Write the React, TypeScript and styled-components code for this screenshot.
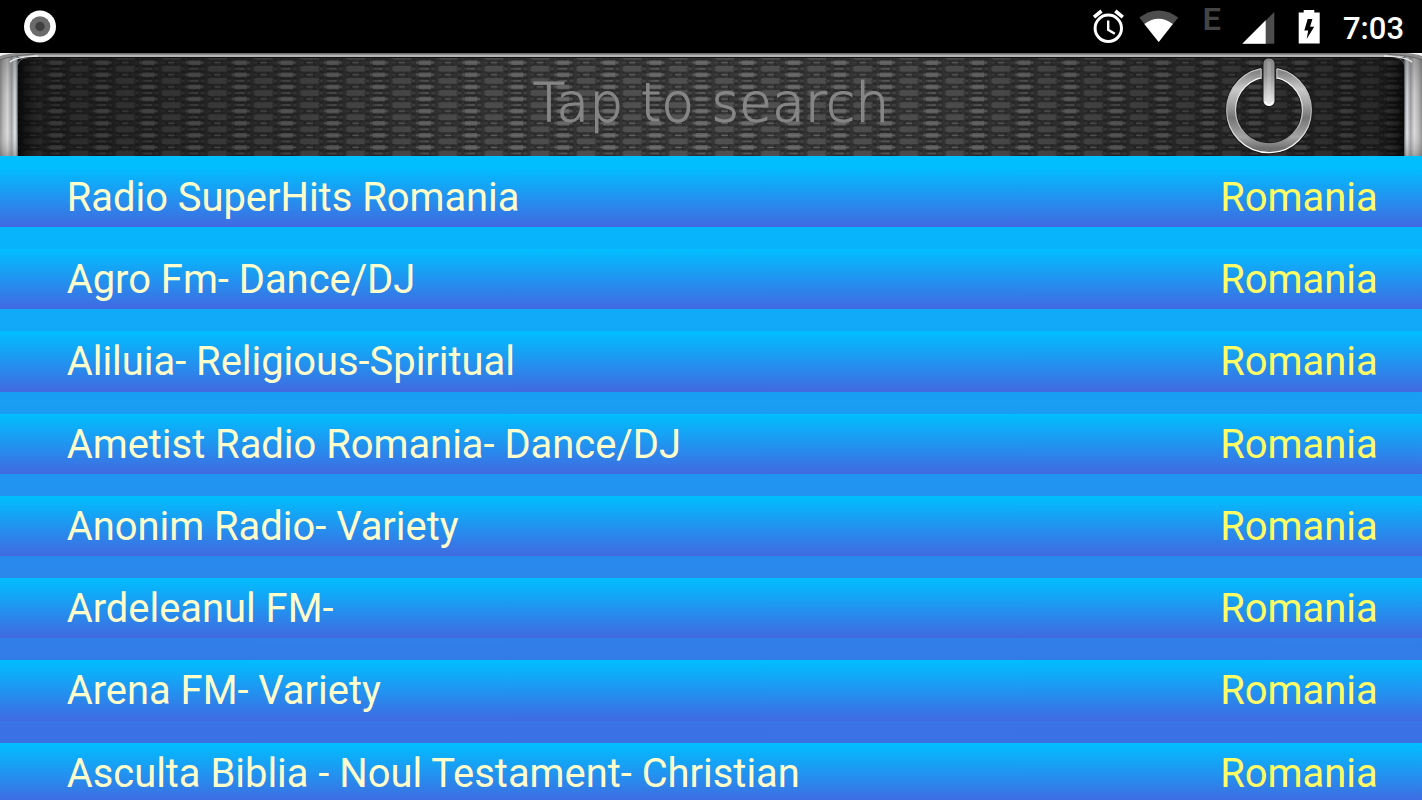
import * as React from 'react';
import styled, { createGlobalStyle } from 'styled-components';

interface IStation {
    name: string
    country: string
}

const stations: IStation[] = [
    { name: 'Radio SuperHits Romania', country: 'Romania' },
    { name: 'Agro Fm- Dance/DJ', country: 'Romania' },
    { name: 'Aliluia- Religious-Spiritual', country: 'Romania' },
    { name: 'Ametist Radio Romania- Dance/DJ', country: 'Romania' },
    { name: 'Anonim Radio- Variety', country: 'Romania' },
    { name: 'Ardeleanul FM-', country: 'Romania' },
    { name: 'Arena FM- Variety', country: 'Romania' },
    { name: 'Asculta Biblia - Noul Testament- Christian', country: 'Romania' },
];

const GlobalStyle = createGlobalStyle`
    body{
        margin: 0;
        background-color: #000;
        overflow: hidden;
    }
`;

const Root = styled.div`
    display: flex;
    flex-direction: column;
    width: 100%;
    height: 800px;
    overflow: hidden;
    font-family: Roboto, sans-serif;
`;

const StatusBar = styled.div`
    flex: none;
    height: 53px;
    display: flex;
    justify-content: space-between;
    background-color: #000;
`;

const StatusRight = styled.div`
    display: flex;
`;

const Clock = styled.div`
    width: 79px;
    padding: 10px 0 0 1px;
    font-size: 31px;
    font-weight: 500;
    line-height: 38px;
    color: #fff;
`;

const Header = styled.div`
    flex: none;
    position: relative;
    height: 103px;
    display: flex;
    justify-content: center;
    background-color: #222;
`;

const HeaderArt = styled.svg`
    position: absolute;
    inset: 0;
`;

const SearchLabel = styled.div`
    position: relative;
    padding-top: 19px;
    font-family: 'DejaVu Sans', sans-serif;
    font-size: 53px;
    font-weight: 200;
    line-height: 62px;
    letter-spacing: 0.3px;
    white-space: pre;
    color: #868686;
    -webkit-text-stroke: 1.1px #868686;
`;

const List = styled.div`
    flex: 1;
    display: flex;
    flex-direction: column;
    gap: 22px;
    padding-top: 10.9px;
    overflow: hidden;
    background: linear-gradient(#00bfff, #4169e1);
`;

const Row = styled.div`
    flex: none;
    height: 60.25px;
    display: flex;
    justify-content: space-between;
    padding: 0 44.4px 0 66.7px;
    font-size: 39.88px;
    line-height: 61px;
    white-space: pre;
    background: linear-gradient(#00bfff, #4169e1);
`;

const StationName = styled.span`
    color: #ffffcc;
`;

const Country = styled.span`
    color: #ffff66;
`;

const StatusIcons = () => (
    <svg width="262" height="53" viewBox="1080 0 262 53">
        <g fill="none" stroke="#fff">
            <circle cx="1108.3" cy="28.3" r="13.2" strokeWidth="3" />
            <path d="M1108.2 20.5v9.2l6.6 4" strokeWidth="2.4" />
            <path d="M1094 17.200l7.500-6.200M1122.800 17.200l-7.500-6.200" strokeWidth="3.6" />
        </g>
        <path d="M1139.300 17.500Q1158.700 3.500 1178.300 17.500L1158.700 42z" fill="#4d4d4d" />
        <path d="M1144.300 24Q1158.600 13.500 1172.800 24L1158.700 42z" fill="#fff" />
        <path d="M1274.300 12v31.700h-32z" fill="#4d4d4d" />
        <path d="M1265.700 20.300v23.400h-23.400z" fill="#fff" />
        <path d="M1303.700 10h10.600v2.500h5.400v31h-21v-31h5z" fill="#fff" />
        <path d="M1307.700 19l-3.400 11.500h3.900l-1.500 8.500 7.500-12.300h-4.100l2.300-7.700z" fill="#000" />
        <text x="1202.500" y="29.700" fontFamily="Roboto" fontSize="30.500" fontWeight="600" textLength="18.500" lengthAdjust="spacingAndGlyphs" fill="#444">E</text>
    </svg>
);

// one side of the metal frame, the right side is the same drawing mirrored
const Pillar = () => (
    <g>
        <rect x="0" y="0" width="18" height="103" fill="url(#pillar)" />
        <rect x="0" y="0" width="18" height="103" fill="url(#pillarShade)" />
        <path d="M18 103V12Q18 5 27 4H40V103z" fill="url(#innerShadow)" />
        <path d="M0 0H36Q12 2 0 7z" fill="#8d8d8d" />
        <path d="M0 0H16Q6 1 0 3z" fill="#f2f2f2" />
        <path d="M0 7Q10 2.500 34 1.500" fill="none" stroke="#666" strokeWidth="1" />
        <path d="M10 9Q16 3.700 38 3" fill="none" stroke="#e6e6e6" strokeWidth="1.7" />
        <path d="M17.500 12Q18.500 5.500 28 4.500" fill="none" stroke="#666" strokeWidth="1" />
    </g>
);

const PowerIcon = () => (
    <g>
        <mask id="ringGap">
            <rect x="1215" y="0" width="110" height="103" fill="#fff" />
            <rect x="1261" y="0" width="16" height="45" fill="#000" />
        </mask>
        <g mask="url(#ringGap)" fill="none">
            <circle cx="1269" cy="57.300" r="38" stroke="#1a1a1a" strokeWidth="12" />
            <circle cx="1269" cy="57.300" r="38" stroke="url(#ring)" strokeWidth="9.500" />
            <circle cx="1269" cy="57.300" r="42.300" stroke="url(#ringOuter)" strokeWidth="1.2" />
            <circle cx="1269" cy="57.300" r="33.500" stroke="url(#ringInner)" strokeWidth="1.3" />
        </g>
        <path d="M1261.200 16v10M1276.800 16v10" stroke="#d0d0d0" strokeWidth="1" />
        <rect x="1262.500" y="5" width="13" height="49" rx="6" fill="#1a1a1a" />
        <rect x="1263.500" y="5.500" width="11" height="47.500" rx="5" fill="url(#stick)" />
        <rect x="1267" y="8" width="4" height="40" rx="2" fill="#fff" opacity="0.15" />
        <path d="M1265 49Q1269 55 1273 49" fill="none" stroke="#fff" strokeWidth="1.6" />
    </g>
);

const App: React.FunctionComponent = () => {
    return (
        <Root>
            <GlobalStyle />
            <StatusBar>
                <svg width="80" height="53">
                    <circle cx="40" cy="26.5" r="16" fill="#fff" />
                    <circle cx="40" cy="26.5" r="10.3" fill="#6b6b6b" />
                    <circle cx="40" cy="26.5" r="4.7" fill="#404040" />
                </svg>
                <StatusRight>
                    <StatusIcons />
                    <Clock>7:03</Clock>
                </StatusRight>
            </StatusBar>
            <Header>
                <HeaderArt width="1422" height="103" viewBox="0 0 1422 103">
                    <defs>
                        <pattern id="mesh" x="10" y="3.700" width="46.1" height="12.1" patternUnits="userSpaceOnUse">
                            <rect width="46.1" height="12.1" fill="#363636" />
                            <path d="M0 3h46.100M0 9h46.100" stroke="#272727" strokeWidth="1.4" strokeDasharray="4 2.590" />
                            <path d="M0 6h46.100M0 0.500h46.100M0 11.700h46.100" stroke="#484848" strokeWidth="1" strokeDasharray="3.300 3.290" />
                            {/* plain column */}
                            <path d="M15 0h16l2 1.500-2 1.500h-16l-2-1.500zM15 9h16l2 1.500-2 1.600h-16l-2-1.600z" fill="#525252" />
                            <path d="M16 4.200h4l3 1 3-1h4l-3 1.800 3 1.800h-4l-3-1-3 1h-4l3-1.800z" fill="#292929" />
                            <path d="M19.500 6h7" stroke="#6a6a6a" strokeWidth="1.4" />
                            {/* bright column, split over the tile edges */}
                            <path d="M0 3.700h6v1.300h3v2h-3v1.400h-6zM46.100 3.700h-6v1.300h-3v2h3v1.400h6z" fill="#636363" />
                            <path d="M0 5.300h6v1.500h-6zM46.100 5.300h-6v1.500h6z" fill="#747474" />
                            <path d="M0 0h4M0 12.100h4M42.100 0h4M42.100 12.100h4" stroke="#626262" strokeWidth="1.6" />
                            <path d="M0 2.300h7M39.100 2.300h7M0 9.900h7M39.100 9.900h7" stroke="#2b2b2b" strokeWidth="1.2" />
                        </pattern>
                        <radialGradient id="vignette" gradientUnits="userSpaceOnUse" cx="0" cy="0" r="1" gradientTransform="translate(711 60) scale(720 330)">
                            <stop offset="0" stopColor="#000" stopOpacity="0" />
                            <stop offset="0.35" stopColor="#000" stopOpacity="0.1" />
                            <stop offset="1" stopColor="#000" stopOpacity="0.54" />
                        </radialGradient>
                        <linearGradient id="pillar">
                            <stop offset="0" stopColor="#858585" />
                            <stop offset="0.2" stopColor="#b5b5b5" />
                            <stop offset="0.42" stopColor="#d6d6d6" />
                            <stop offset="0.65" stopColor="#9a9a9a" />
                            <stop offset="0.83" stopColor="#dfe7ec" />
                            <stop offset="0.92" stopColor="#a0a8ad" />
                            <stop offset="1" stopColor="#333" />
                        </linearGradient>
                        <linearGradient id="pillarShade" x1="0" y1="0" x2="0" y2="1">
                            <stop offset="0" stopColor="#555" stopOpacity="0.5" />
                            <stop offset="0.4" stopColor="#777" stopOpacity="0.1" />
                            <stop offset="0.75" stopColor="#fff" stopOpacity="0.1" />
                            <stop offset="1" stopColor="#666" stopOpacity="0.45" />
                        </linearGradient>
                        <linearGradient id="innerShadow">
                            <stop offset="0" stopColor="#000" stopOpacity="0.6" />
                            <stop offset="1" stopColor="#000" stopOpacity="0" />
                        </linearGradient>
                        <linearGradient id="ring" x1="0" y1="0" x2="0" y2="1">
                            <stop offset="0" stopColor="#858585" />
                            <stop offset="0.22" stopColor="#c9c9c9" />
                            <stop offset="0.4" stopColor="#a8a8a8" />
                            <stop offset="0.6" stopColor="#757575" />
                            <stop offset="0.85" stopColor="#a5a5a5" />
                            <stop offset="1" stopColor="#707070" />
                        </linearGradient>
                        <linearGradient id="ringOuter" x1="0" y1="0" x2="0" y2="1">
                            <stop offset="0" stopColor="#ccc" />
                            <stop offset="0.5" stopColor="#aaa" />
                            <stop offset="1" stopColor="#fff" />
                        </linearGradient>
                        <linearGradient id="ringInner" x1="0" y1="0" x2="0" y2="1">
                            <stop offset="0" stopColor="#fff" />
                            <stop offset="0.4" stopColor="#ddd" />
                            <stop offset="1" stopColor="#888" />
                        </linearGradient>
                        <linearGradient id="stick" x1="0" y1="0" x2="0" y2="1">
                            <stop offset="0" stopColor="#858585" />
                            <stop offset="0.35" stopColor="#979797" />
                            <stop offset="0.8" stopColor="#d4d4d4" />
                            <stop offset="1" stopColor="#eee" />
                        </linearGradient>
                    </defs>
                    <rect width="1422" height="103" fill="url(#mesh)" />
                    <rect width="1422" height="103" fill="url(#vignette)" />
                    <rect width="1422" height="1" fill="#6f6f6f" />
                    <rect y="1" width="1422" height="1" fill="#8c8c8c" />
                    <rect y="2" width="1422" height="2" fill="#b4b4b4" />
                    <rect y="4" width="1422" height="1" fill="#111" />
                    <Pillar />
                    <g transform="translate(1422 0) scale(-1 1)">
                        <Pillar />
                    </g>
                    <PowerIcon />
                </HeaderArt>
                <SearchLabel>Tap to search</SearchLabel>
            </Header>
            <List>
                { stations.map((station) => (
                    <Row key={ station.name }>
                        <StationName>{ station.name }</StationName>
                        <Country>{ station.country }</Country>
                    </Row>
                )) }
            </List>
        </Root>
    );
};

export default App;
